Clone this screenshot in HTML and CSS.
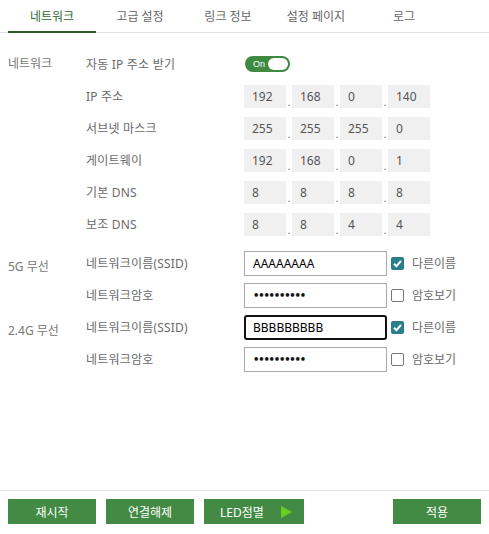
FILE: index.html
```html
<!DOCTYPE html>
<html lang="ko">
<head>
<meta charset="utf-8">
<title>네트워크 설정</title>
<link rel="stylesheet" href="styles.css">
</head>
<body>
<div class="page">
  <nav class="tabs">
    <div class="tab active">네트워크</div>
    <div class="tab">고급 설정</div>
    <div class="tab">링크 정보</div>
    <div class="tab">설정 페이지</div>
    <div class="tab">로그</div>
  </nav>

  <main class="content">
    <section class="group">
      <div class="group-label">네트워크</div>
      <div class="rows">
        <div class="row">
          <div class="label">자동 IP 주소 받기</div>
          <div class="toggle"><span class="toggle-text">On</span><span class="knob"></span></div>
        </div>
        <div class="row">
          <div class="label">IP 주소</div>
          <div class="ip"><span class="oct">192</span><span class="sep">.</span><span class="oct">168</span><span class="sep">.</span><span class="oct">0</span><span class="sep">.</span><span class="oct">140</span></div>
        </div>
        <div class="row">
          <div class="label">서브넷 마스크</div>
          <div class="ip"><span class="oct">255</span><span class="sep">.</span><span class="oct">255</span><span class="sep">.</span><span class="oct">255</span><span class="sep">.</span><span class="oct">0</span></div>
        </div>
        <div class="row">
          <div class="label">게이트웨이</div>
          <div class="ip"><span class="oct">192</span><span class="sep">.</span><span class="oct">168</span><span class="sep">.</span><span class="oct">0</span><span class="sep">.</span><span class="oct">1</span></div>
        </div>
        <div class="row">
          <div class="label">기본 DNS</div>
          <div class="ip"><span class="oct">8</span><span class="sep">.</span><span class="oct">8</span><span class="sep">.</span><span class="oct">8</span><span class="sep">.</span><span class="oct">8</span></div>
        </div>
        <div class="row">
          <div class="label">보조 DNS</div>
          <div class="ip"><span class="oct">8</span><span class="sep">.</span><span class="oct">8</span><span class="sep">.</span><span class="oct">4</span><span class="sep">.</span><span class="oct">4</span></div>
        </div>
      </div>
    </section>

    <section class="group wireless first">
      <div class="group-label offset">5G 무선</div>
      <div class="rows">
        <div class="row">
          <div class="label">네트워크이름(SSID)</div>
          <div class="text-field">AAAAAAAA</div>
          <span class="check checked"><svg viewBox="0 0 13 13" width="13" height="13"><path d="M3 6.8 L5.4 9.2 L10 3.8" fill="none" stroke="#fff" stroke-width="2"/></svg></span>
          <span class="check-label">다른이름</span>
        </div>
        <div class="row">
          <div class="label">네트워크암호</div>
          <div class="text-field pw">••••••••••</div>
          <span class="check"></span>
          <span class="check-label">암호보기</span>
        </div>
      </div>
    </section>

    <section class="group wireless">
      <div class="group-label offset">2.4G 무선</div>
      <div class="rows">
        <div class="row">
          <div class="label">네트워크이름(SSID)</div>
          <div class="text-field focused">BBBBBBBBB</div>
          <span class="check checked"><svg viewBox="0 0 13 13" width="13" height="13"><path d="M3 6.8 L5.4 9.2 L10 3.8" fill="none" stroke="#fff" stroke-width="2"/></svg></span>
          <span class="check-label">다른이름</span>
        </div>
        <div class="row">
          <div class="label">네트워크암호</div>
          <div class="text-field pw">••••••••••</div>
          <span class="check"></span>
          <span class="check-label">암호보기</span>
        </div>
      </div>
    </section>
  </main>

  <footer class="footer">
    <button class="btn">재시작</button>
    <button class="btn">연결해제</button>
    <button class="btn btn-led">LED점멸<span class="play"></span></button>
    <button class="btn btn-apply">적용</button>
  </footer>
</div>
</body>
</html>
```

FILE: styles.css
```css
html, body {
  margin: 0;
  padding: 0;
  background: #fff;
}

body {
  font-family: "Noto Sans", "Noto Sans CJK KR", sans-serif;
  font-size: 12px;
  color: #666;
}

.page {
  display: flex;
  flex-direction: column;
  min-height: 100vh;
}

/* Tabs */
.tabs {
  display: flex;
  padding: 0 8px;
  height: 32px;
  border-bottom: 1px solid #e2e2e2;
}

.tab {
  width: 88px;
  height: 31px;
  line-height: 34px;
  text-align: center;
  color: #666;
  font-size: 12px;
  box-sizing: border-box;
}

.tab.active {
  color: #2f6a30;
  border-bottom: 2px solid #2b5c27;
  height: 33px;
}

/* Content */
.content {
  padding: 15px 8px 0 8px;
}

.group {
  display: flex;
}

.group.first {
  margin-top: 7px;
}

.group-label {
  width: 78px;
  flex: none;
  line-height: 32px;
  color: #777;
}

.group-label.offset {
  padding-top: 4px;
}

.rows {
  display: flex;
  flex-direction: column;
}

.row {
  display: flex;
  align-items: center;
  height: 32px;
}

.label {
  width: 158px;
  flex: none;
  color: #6a6a6a;
  letter-spacing: 0.2px;
}

/* Toggle */
.toggle {
  margin-left: 1px;
  width: 45px;
  height: 16px;
  border-radius: 8px;
  background: #3e8a40;
  display: flex;
  align-items: center;
  justify-content: space-between;
  box-sizing: border-box;
  padding: 0 2px 0 8px;
}

.toggle-text {
  color: #fff;
  font-size: 9px;
  line-height: 16px;
  font-family: "Liberation Sans", sans-serif;
}

.knob {
  width: 20px;
  height: 12px;
  border-radius: 6px;
  background: #fff;
}

/* IP boxes */
.ip {
  display: flex;
  height: 23px;
}

.oct {
  width: 42px;
  height: 23px;
  box-sizing: border-box;
  padding-left: 8px;
  background: #f0f0f0;
  line-height: 23px;
  color: #555;
  font-size: 12px;
}

.sep {
  width: 6px;
  text-align: center;
  align-self: flex-end;
  line-height: 12px;
  font-size: 11px;
  color: #777;
}

/* Text fields */
.text-field {
  width: 143px;
  height: 25px;
  box-sizing: border-box;
  border: 1px solid #a9a9a9;
  padding-left: 8px;
  line-height: 23px;
  color: #000;
  font-size: 12px;
}

.text-field.pw {
  font-family: "DejaVu Sans", sans-serif;
  font-size: 10px;
  letter-spacing: -1.2px;
  font-weight: bold;
  color: #111;
}

.text-field.focused {
  border: 2px solid #111;
  border-radius: 3px;
  padding-left: 7px;
  line-height: 21px;
}

.check {
  margin-left: 4px;
  width: 13px;
  height: 13px;
  box-sizing: border-box;
  border: 1px solid #767676;
  border-radius: 2px;
  background: #fff;
  display: flex;
}

.check.checked {
  border: none;
  background: #2a7d8c;
}

.check-label {
  margin-left: 8px;
  color: #6a6a6a;
}

/* Footer */
.footer {
  margin-top: auto;
  border-top: 1px solid #e4e4e4;
  padding: 8px 8px 10px 8px;
  display: flex;
  gap: 10px;
}

.btn {
  height: 25px;
  width: 88px;
  border: none;
  background: #438a45;
  color: #fff;
  font-family: "Noto Sans", "Noto Sans CJK KR", sans-serif;
  font-size: 12px;
  padding: 0;
  display: flex;
  align-items: center;
  justify-content: center;
}

.btn-led {
  width: 100px;
  justify-content: flex-start;
  padding-left: 16px;
}

.play {
  margin-left: 17px;
  width: 0;
  height: 0;
  border-top: 6px solid transparent;
  border-bottom: 6px solid transparent;
  border-left: 11px solid #6ccc26;
}

.btn-apply {
  margin-left: auto;
}
```
